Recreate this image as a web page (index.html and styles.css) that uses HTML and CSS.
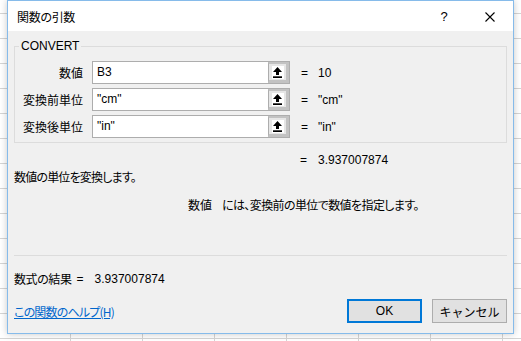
FILE: index.html
```html
<!DOCTYPE html>
<html lang="ja">
<head>
<meta charset="utf-8">
<title>関数の引数</title>
<link rel="stylesheet" href="styles.css">
</head>
<body>
<div class="dialog">
  <div class="titlebar">
    <span class="title">関数の引数</span>
    <span class="cap help">?</span>
    <span class="cap close"><svg width="10" height="10" viewBox="0 0 10 10"><path d="M0.5 0.5 L9.5 9.5 M9.5 0.5 L0.5 9.5" stroke="#000" stroke-width="1.1" fill="none"/></svg></span>
  </div>
  <div class="content">
    <fieldset class="group">
      <legend>CONVERT</legend>
      <div class="row">
        <span class="label">数値</span>
        <div class="field"><span class="input">B3</span><span class="pick"><span class="pick-inner"><svg width="9" height="11" viewBox="0 0 9 11"><path d="M4.5 0 L9 5 L6 5 L6 8 L3 8 L3 5 L0 5 Z" fill="#000"/><rect x="0" y="9.3" width="9" height="1.7" fill="#000"/></svg></span></span></div>
        <span class="eq">=</span><span class="val">10</span>
      </div>
      <div class="row">
        <span class="label">変換前単位</span>
        <div class="field"><span class="input">"cm"</span><span class="pick"><span class="pick-inner"><svg width="9" height="11" viewBox="0 0 9 11"><path d="M4.5 0 L9 5 L6 5 L6 8 L3 8 L3 5 L0 5 Z" fill="#000"/><rect x="0" y="9.3" width="9" height="1.7" fill="#000"/></svg></span></span></div>
        <span class="eq">=</span><span class="val">"cm"</span>
      </div>
      <div class="row">
        <span class="label">変換後単位</span>
        <div class="field"><span class="input">"in"</span><span class="pick"><span class="pick-inner"><svg width="9" height="11" viewBox="0 0 9 11"><path d="M4.5 0 L9 5 L6 5 L6 8 L3 8 L3 5 L0 5 Z" fill="#000"/><rect x="0" y="9.3" width="9" height="1.7" fill="#000"/></svg></span></span></div>
        <span class="eq">=</span><span class="val">"in"</span>
      </div>
    </fieldset>
    <div class="result"><span class="eq">=</span><span>3.937007874</span></div>
    <div class="desc">数値の単位を変換します。</div>
    <div class="argdesc"><span class="argname">数値</span><span class="argtext">には、変換前の単位で数値を指定します。</span></div>
    <div class="sep"></div>
    <div class="formula"><span class="flabel">数式の結果</span><span class="feq">=</span><span class="fval">3.937007874</span></div>
    <div class="footer">
      <a class="helplink" href="#">この関数のヘルプ(H)</a>
      <div class="buttons">
        <button class="btn ok">OK</button>
        <button class="btn">キャンセル</button>
      </div>
    </div>
  </div>
</div>
</body>
</html>
```

FILE: styles.css
```css
html, body {
  margin: 0;
  padding: 0;
}
body {
  width: 521px;
  height: 341px;
  overflow: hidden;
  position: relative;
  background-color: #ffffff;
  background-image:
    linear-gradient(to bottom, #d4d4d4 0 1px, transparent 1px),
    linear-gradient(to right, #d4d4d4 0 1px, transparent 1px);
  background-size: 100% 25px, 72px 100%;
  background-position: 0 13px, 70px 0;
  font-family: "Liberation Sans", "Noto Sans CJK JP", sans-serif;
  font-size: 12px;
  color: #000;
  font-feature-settings: "palt";
}
.dialog {
  position: absolute;
  left: 7px;
  top: 0;
  width: 505px;
  height: 332px;
  border: 1px solid #86bbea;
  background: #f0f0f0;
  box-shadow: 0 0 7px rgba(0, 0, 0, 0.22);
  display: flex;
  flex-direction: column;
}
.titlebar {
  height: 30px;
  background: #fff;
  display: flex;
  align-items: center;
}
.title {
  flex: 1;
  padding-left: 9px;
  line-height: 14px;
  font-family: "Noto Sans CJK JP", sans-serif;
  letter-spacing: -0.3px;
  margin-top: 1px;
}
.cap {
  width: 46px;
  height: 30px;
  display: flex;
  align-items: center;
  justify-content: center;
}
.help {
  font-size: 13px;
  margin-top: 1px;
}
.close svg {
  display: block;
  margin-top: 1px;
}
.content {
  flex: 1;
  padding: 0 6px 10px 6px;
  display: flex;
  flex-direction: column;
}
.group {
  margin: 8px 0 0 0;
  padding: 8px 0 4px 0;
  border: 1px solid #dcdcdc;
  min-width: 0;
  display: flex;
  flex-direction: column;
  gap: 4px;
}
.group legend {
  padding: 0 2px;
  margin-left: 4px;
  line-height: 14px;
  font-size: 12px;
}
.row {
  display: grid;
  grid-template-columns: 77px 198px 28px auto;
  align-items: center;
  height: 23px;
}
.label {
  width: 68px;
  box-sizing: border-box;
  text-align: right;
  font-family: "Noto Sans CJK JP", sans-serif;
  white-space: nowrap;
}
.field {
  height: 23px;
  box-sizing: border-box;
  border: 1px solid #adadad;
  background: #fff;
  display: flex;
}
.input {
  flex: 1;
  padding-left: 4px;
  line-height: 21px;
}
.pick {
  width: 21px;
  box-sizing: border-box;
  border-left: 1px solid #adadad;
  border-top: 2px solid #c2c2c2;
  border-right: 3px solid #c2c2c2;
  border-bottom: 3px solid #c2c2c2;
  background: #e6e6e6;
  display: flex;
  align-items: center;
  justify-content: center;
}
.pick-inner {
  width: 12px;
  height: 13px;
  background: #fff;
  display: flex;
  align-items: center;
  justify-content: center;
}
.pick-inner svg {
  display: block;
}
.row .eq {
  padding-left: 11px;
}
.result {
  margin-top: 10px;
  margin-left: 286px;
  line-height: 14px;
  display: flex;
}
.result .eq {
  width: 18px;
}
.desc {
  margin-top: 3px;
  line-height: 14px;
  font-family: "Noto Sans CJK JP", sans-serif;
  letter-spacing: -0.8px;
}
.argdesc {
  margin-top: 14px;
  margin-left: 174px;
  line-height: 14px;
  font-family: "Noto Sans CJK JP", sans-serif;
  display: flex;
}
.argname {
  width: 34px;
}
.argtext {
  letter-spacing: -0.6px;
}
.sep {
  margin-top: 43px;
  height: 1px;
  background: #dcdcdc;
}
.formula {
  margin-top: 16px;
  line-height: 14px;
  display: flex;
}
.flabel {
  font-family: "Noto Sans CJK JP", sans-serif;
  letter-spacing: -0.4px;
}
.feq {
  margin-left: 5px;
}
.fval {
  padding-left: 11px;
}
.footer {
  margin-top: 13px;
  display: flex;
  align-items: center;
  justify-content: space-between;
  height: 24px;
}
.helplink {
  color: #0066cc;
  text-decoration: underline;
  font-family: "Noto Sans CJK JP", sans-serif;
  letter-spacing: -0.8px;
  line-height: 14px;
  margin-top: 2px;
}
.buttons {
  display: flex;
  gap: 10px;
}
.btn {
  width: 75px;
  height: 24px;
  box-sizing: border-box;
  border: 1px solid #adadad;
  background: #e1e1e1;
  font-family: "Liberation Sans", "Noto Sans CJK JP", sans-serif;
  font-size: 12px;
  color: #000;
  padding: 0;
  margin: 0;
}
.btn.ok {
  border: 2px solid #0078d7;
}
```
